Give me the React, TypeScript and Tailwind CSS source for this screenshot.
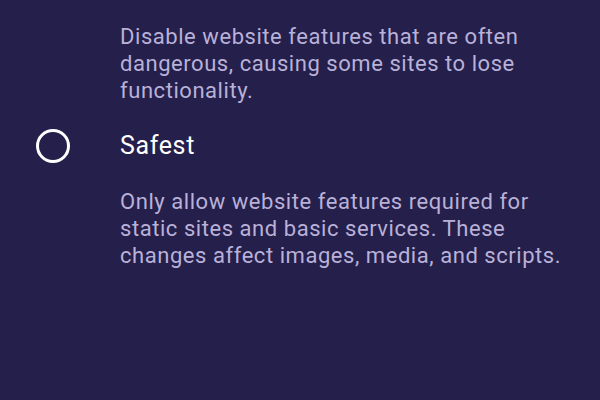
const Description = ({ children }: { children: React.ReactNode }) => (
  <p className="pl-[120px] pr-6 text-[22px] leading-[27px] tracking-[0.025em] text-[#b9b1d8]">
    {children}
  </p>
);

export default function App() {
  return (
    <div
      className="h-[400px] w-[600px] overflow-hidden bg-[#251f4b] pt-[23px]"
      style={{ fontFamily: 'Roboto, "Noto Sans", sans-serif' }}
    >
      <Description>
        Disable website features that are often dangerous, causing some sites to lose functionality.
      </Description>
      <div className="mt-[14px] flex h-[56px] items-center">
        <div className="ml-[36px] h-[34px] w-[34px] rounded-full border-[3px] border-white" />
        <span className="ml-[50px] text-[25px] tracking-[0.025em] text-white">Safest</span>
      </div>
      <div className="mt-[14px]">
        <Description>
          Only allow website features required for static sites and basic services. These changes
          affect images, media, and scripts.
        </Description>
      </div>
    </div>
  );
}
